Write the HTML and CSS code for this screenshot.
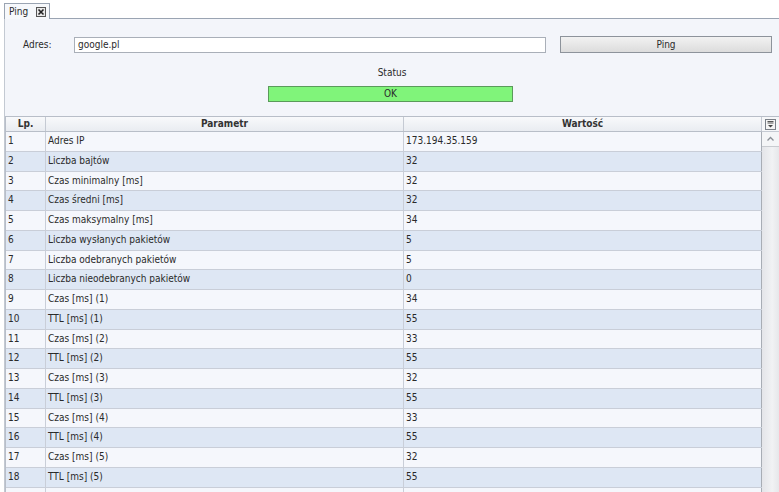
FILE: index.html
```html
<!DOCTYPE html>
<html>
<head>
<meta charset="utf-8">
<link rel="stylesheet" href="styles.css">
</head>
<body>
<div class="tabbar">
  <div class="tab">Ping <span class="close"><svg width="10" height="10" viewBox="0 0 10 10"><rect x="0.5" y="0.5" width="9" height="9" fill="#e8e8e8" stroke="#555"/><path d="M2.5 2.5 L7.5 7.5 M7.5 2.5 L2.5 7.5" stroke="#222" stroke-width="1.6"/></svg></span></div>
</div>
<div class="panel">
  <div class="form">
    <label class="lbl">Adres:</label>
    <div class="input">google.pl</div>
    <div class="btn">Ping</div>
  </div>
  <div class="status">Status</div>
  <div class="okbar">OK</div>
  <div class="table">
    <div class="grid">
      <div class="head">
        <div class="c1">Lp.</div><div class="c2">Parametr</div><div class="c3">Wartość</div>
      </div>
      <div class="row"><div class="c1">1</div><div class="c2">Adres IP</div><div class="c3">173.194.35.159</div></div>
      <div class="row"><div class="c1">2</div><div class="c2">Liczba bajtów</div><div class="c3">32</div></div>
      <div class="row"><div class="c1">3</div><div class="c2">Czas minimalny [ms]</div><div class="c3">32</div></div>
      <div class="row"><div class="c1">4</div><div class="c2">Czas średni [ms]</div><div class="c3">32</div></div>
      <div class="row"><div class="c1">5</div><div class="c2">Czas maksymalny [ms]</div><div class="c3">34</div></div>
      <div class="row"><div class="c1">6</div><div class="c2">Liczba wysłanych pakietów</div><div class="c3">5</div></div>
      <div class="row"><div class="c1">7</div><div class="c2">Liczba odebranych pakietów</div><div class="c3">5</div></div>
      <div class="row"><div class="c1">8</div><div class="c2">Liczba nieodebranych pakietów</div><div class="c3">0</div></div>
      <div class="row"><div class="c1">9</div><div class="c2">Czas [ms] (1)</div><div class="c3">34</div></div>
      <div class="row"><div class="c1">10</div><div class="c2">TTL [ms] (1)</div><div class="c3">55</div></div>
      <div class="row"><div class="c1">11</div><div class="c2">Czas [ms] (2)</div><div class="c3">33</div></div>
      <div class="row"><div class="c1">12</div><div class="c2">TTL [ms] (2)</div><div class="c3">55</div></div>
      <div class="row"><div class="c1">13</div><div class="c2">Czas [ms] (3)</div><div class="c3">32</div></div>
      <div class="row"><div class="c1">14</div><div class="c2">TTL [ms] (3)</div><div class="c3">55</div></div>
      <div class="row"><div class="c1">15</div><div class="c2">Czas [ms] (4)</div><div class="c3">33</div></div>
      <div class="row"><div class="c1">16</div><div class="c2">TTL [ms] (4)</div><div class="c3">55</div></div>
      <div class="row"><div class="c1">17</div><div class="c2">Czas [ms] (5)</div><div class="c3">32</div></div>
      <div class="row"><div class="c1">18</div><div class="c2">TTL [ms] (5)</div><div class="c3">55</div></div>
      <div class="row"><div class="c1"></div><div class="c2"></div><div class="c3"></div></div>
    </div>
    <div class="scroll">
      <div class="sb-head"><svg width="11" height="11" viewBox="0 0 11 11"><rect x="0.5" y="0.5" width="10" height="10" fill="#f4f4f4" stroke="#7a8088"/><path d="M2.5 2.5 H8.5 M2.5 4 H8.5" stroke="#555"/><path d="M3 6 L8 6 L5.5 8.5 Z" fill="#444"/></svg></div>
      <div class="sb-up"><svg width="9" height="6" viewBox="0 0 9 6"><path d="M1.5 4.5 L4.5 1.5 L7.5 4.5" fill="none" stroke="#8a8f96" stroke-width="1.3"/></svg></div>
      <div class="sb-track"></div>
    </div>
  </div>
</div>
</body>
</html>
```
FILE: styles.css
```css
html, body { margin: 0; padding: 0; }
body {
  width: 779px;
  height: 492px;
  overflow: hidden;
  background: #ffffff;
  font-family: "DejaVu Sans Condensed", "DejaVu Sans", sans-serif;
  font-size: 10px;
  color: #2a2a2a;
}
.tabbar {
  height: 18px;
  padding-left: 4px;
  display: flex;
  align-items: flex-end;
}
.tab {
  height: 16px;
  box-sizing: border-box;
  border: 1px solid #9aa4b2;
  border-bottom: none;
  background: #f6f8fb;
  padding: 0 4px 0 4px;
  display: flex;
  align-items: center;
  gap: 8px;
  width: 46px;
  margin-bottom: -1px;
  position: relative;
  z-index: 1;
  font-size: 10px;
}
.close { display: flex; }
.panel {
  margin-left: 4px;
  border-top: 1px solid #9aa4b2;
  border-left: 1px solid #c3c9d2;
  background: #f3f5fa;
  height: 473px;
  overflow: hidden;
}
.form {
  display: flex;
  align-items: center;
  padding-top: 17px;
  height: 17px;
}
.lbl {
  width: 51px;
  padding-left: 18px;
}
.input {
  height: 14px;
  border: 1px solid #a9afb8;
  background: #fff;
  padding-left: 3px;
  line-height: 14px;
  width: 467px;
}
.btn {
  margin-left: 14px;
  width: 210px;
  height: 15px;
  border: 1px solid #8d939b;
  background: linear-gradient(#f2f2f2, #dcdcdc);
  text-align: center;
  line-height: 15px;
}
.status {
  text-align: center;
  margin-top: 13px;
  height: 14px;
  line-height: 14px;
}
.okbar {
  margin: 6px 0 0 263px;
  width: 243px;
  height: 14px;
  line-height: 14px;
  border: 1px solid #5a9a5a;
  background: #80f47a;
  text-align: center;
}
.table {
  margin-top: 14px;
  width: 773px;
  display: flex;
  border-top: 1px solid #b8bec8;
  border-left: 1px solid #b8bec8;
  height: 380px;
}
.grid { width: 756px; overflow: hidden; }
.head, .row {
  display: grid;
  grid-template-columns: 40px 358px 358px;
}
.head {
  height: 14px;
  line-height: 14px;
  background: linear-gradient(#f8f9fb, #e9ecf1);
  border-bottom: 1px solid #b8bec8;
  font-weight: bold;
  color: #333;
  text-align: center;
}
.head > div { border-right: 1px solid #c5cad3; }
.row {
  height: 19.75px;
  box-sizing: border-box;
  line-height: 18px;
  border-bottom: 1px solid #c9ced8;
  background: #f5f7fc;
}
.row:nth-child(odd) { background: #dee7f4; }
.row > div {
  padding-left: 2px;
  border-right: 1px solid #c9ced8;
  white-space: nowrap;
  overflow: hidden;
}
.row > .c3 { border-right: 1px solid #a8adb5; }
.scroll {
  width: 17px;
  background: linear-gradient(90deg, #e4e5e9, #f1f2f4 60%, #e6e7ea);
  display: flex;
  flex-direction: column;
}
.sb-head {
  height: 14px;
  display: flex;
  justify-content: center;
  align-items: center;
  background: #f6f7f9;
  border-bottom: 1px solid #c5cad3;
}
.sb-up {
  height: 14px;
  display: flex;
  justify-content: center;
  align-items: center;
  border-bottom: 1px solid #c8cbd0;
  background: #f4f5f7;
}
.sb-track { flex: 1; }
```
